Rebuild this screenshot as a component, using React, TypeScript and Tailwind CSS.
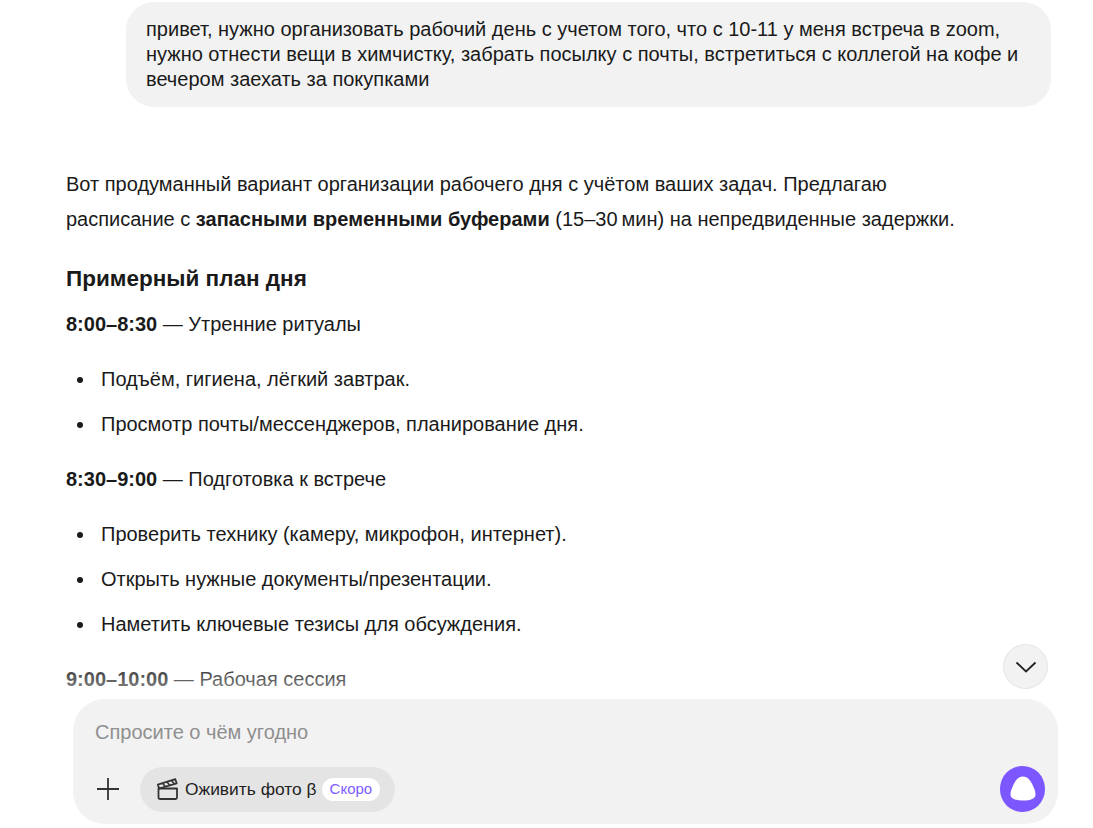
const font = { fontFamily: '"Liberation Sans", Arial, sans-serif' };

function Section({ time, title, items }: { time: string; title: string; items: string[] }) {
  return (
    <div className="flex flex-col gap-[20px]">
      <p className="leading-[35px]">
        <b>{time}</b> — {title}
      </p>
      <ul className="flex flex-col gap-[10px] pl-[11px]">
        {items.map((item) => (
          <li key={item} className="flex items-center gap-[18px] leading-[35px]">
            <span className="w-[6px] h-[6px] rounded-full bg-[#1a1a1a] shrink-0" />
            {item}
          </li>
        ))}
      </ul>
    </div>
  );
}

function Composer() {
  return (
    <div className="shrink-0 ml-[73px] mr-[35px] mb-[4px] h-[125px] rounded-[32px] bg-[#f2f2f2] flex flex-col justify-between pl-[22px] pr-[13px] pt-[20px] pb-[12px]">
      <div className="text-[20px] leading-[26px] text-[#8f8f8f]">Спросите о чём угодно</div>
      <div className="flex items-center">
        <svg width="24" height="24" viewBox="0 0 24 24" fill="none" stroke="#333" strokeWidth="1.8" className="shrink-0">
          <path d="M13 1v22M2 12h22" />
        </svg>
        <div className="ml-[21px] flex items-center h-[45px] w-[255px] rounded-full bg-[#e4e4e4] pl-[17px]">
          <svg width="22" height="22" viewBox="0 0 22 22" fill="none" stroke="#333" strokeWidth="1.8" strokeLinejoin="round" className="shrink-0">
            <path d="M1.500 10.500h18.500v9a1.500 1.500 0 0 1-1.500 1.500h-15.500a1.500 1.500 0 0 1-1.500-1.500z" />
            <path d="M.8 6.600 18.300 1.200 19.600 5.300 2.100 10.500z" />
            <path d="m5.500 5.300 3 3.500M10 4l3 3.500M14.500 2.600l3 3.500" strokeWidth="1.500" />
          </svg>
          <span className="ml-[6px] text-[17.4px] text-[#1f1f1f] whitespace-nowrap">Оживить фото β</span>
          <span className="ml-[5px] flex items-center h-[23px] px-[8px] rounded-full bg-white text-[15px] text-[#7b5cff]">Скоро</span>
        </div>
        <div className="ml-auto flex items-center justify-center w-[45px] h-[46px] rounded-full bg-[#7c56ff]">
          <svg width="26" height="25" viewBox="0 0 26 25" className="-mt-[1px]">
            <path d="M13 .5C18 .5 21 5 23.500 11C24.800 14 25.500 16 25.500 18.500C25.500 22.500 21 24.500 13 24.500C5 24.500 .5 22.500 .5 18.500C.5 16 1.200 14 2.500 11C5 5 8 .5 13 .5Z" fill="#fff" />
          </svg>
        </div>
      </div>
    </div>
  );
}

export default function App() {
  return (
    <div className="h-screen flex flex-col overflow-hidden bg-white text-[#1a1a1a] text-[20px]" style={font}>
      <div className="relative flex-1 min-h-0 overflow-hidden pt-[2px] pl-[66px] pr-[42px]">
        <div className="ml-[60px] h-[105px] rounded-[28px] bg-[#f2f2f2] px-[20px] py-[15px] leading-[25px]">
          привет, нужно организовать рабочий день с учетом того, что с 10-11 у меня встреча в zoom, нужно отнести вещи в химчистку, забрать посылку с почты, встретиться с коллегой на кофе и вечером заехать за покупками
        </div>
        <p className="mt-[60px] leading-[35px] w-[900px]">
          Вот продуманный вариант организации рабочего дня с учётом ваших задач. Предлагаю расписание с <b>запасными временными буферами</b> (15–30{"\u202f"}мин) на непредвиденные задержки.
        </p>
        <h2 className="mt-[27px] mb-[13px] text-[22.5px] leading-[30px] font-bold">Примерный план дня</h2>
        <div className="flex flex-col gap-[20px]">
          <Section time="8:00–8:30" title="Утренние ритуалы" items={["Подъём, гигиена, лёгкий завтрак.", "Просмотр почты/мессенджеров, планирование дня."]} />
          <Section time="8:30–9:00" title="Подготовка к встрече" items={["Проверить технику (камеру, микрофон, интернет).", "Открыть нужные документы/презентации.", "Наметить ключевые тезисы для обсуждения."]} />
          <p className="leading-[35px]">
            <b>9:00–10:00</b> — Рабочая сессия
          </p>
        </div>
        <div className="absolute left-0 right-0 bottom-0 h-[40px] bg-gradient-to-b from-white/0 to-white/60" />
        <button className="absolute right-[45px] bottom-[10px] flex items-center justify-center w-[45px] h-[45px] rounded-full bg-[#f2f2f2] border border-[#e4e4e4]">
          <svg width="22" height="12" viewBox="0 0 22 12" fill="none" stroke="#222" strokeWidth="1.8">
            <path d="M1.500 1.500 11 10.500l9.500-9" />
          </svg>
        </button>
      </div>
      <Composer />
    </div>
  );
}
